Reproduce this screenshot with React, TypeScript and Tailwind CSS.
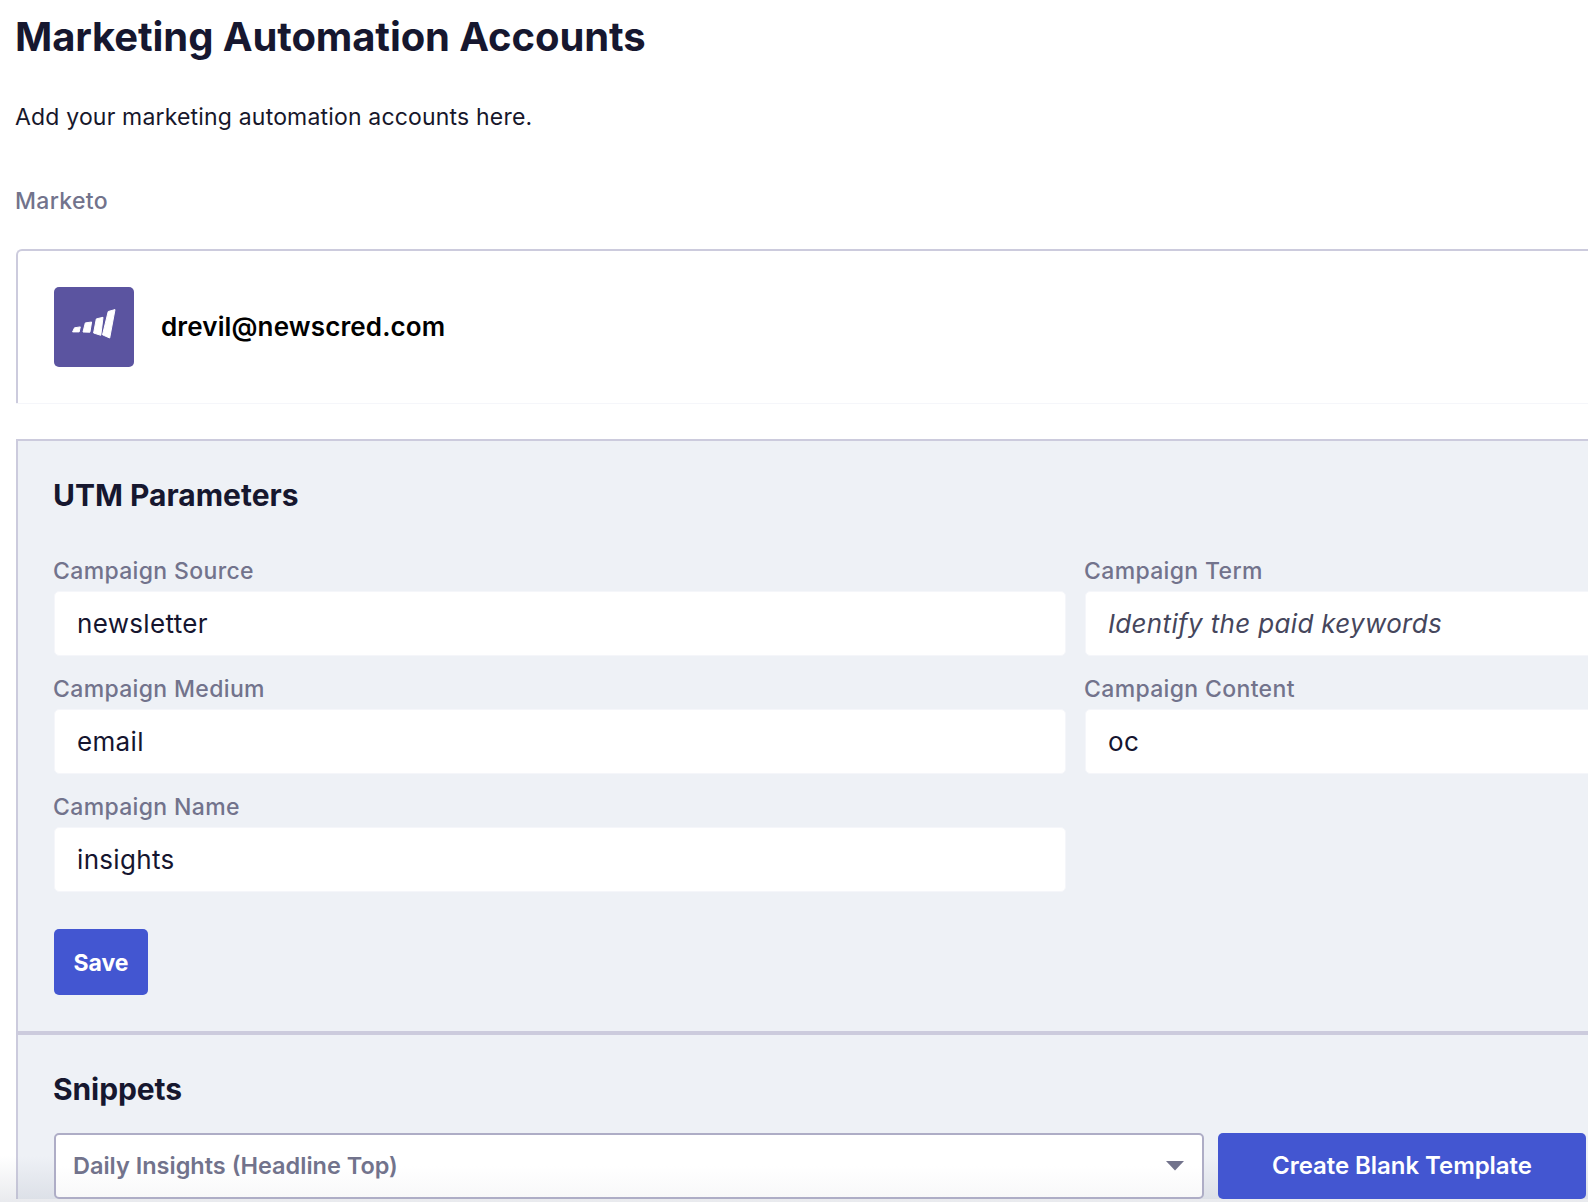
const font = { fontFamily: '"Inter", "Lato", sans-serif' };

function Field({ label, value, italic }: { label: string; value: string; italic?: boolean }) {
  return (
    <div className="flex flex-col">
      <div className="-ml-px h-[37px] text-[23px] leading-[34px] font-medium text-[#72738c] tracking-[0.35px]">{label}</div>
      <div className="h-[65px] rounded-[5px] border border-[#f5f6fa] bg-white pl-[22px] flex items-center">
        <span className={italic ? "text-[26px] italic text-[#45465c] tracking-[0.33px]" : "text-[26px] text-[#15152f] tracking-[0.33px]"}>{value}</span>
      </div>
    </div>
  );
}

export default function App() {
  return (
    <div className="relative h-[1202px] w-[1588px] overflow-hidden bg-white" style={font}>
      <div className="pl-[16px]">
        <h1 className="-ml-px pt-[10px] h-[76px] text-[40px] leading-[54px] font-bold text-[#16172f] tracking-[-0.1px]">Marketing Automation Accounts</h1>
        <p className="-ml-px mt-[22px] h-[38px] text-[23px] leading-[38px] text-[#17172b] tracking-[0.18px]">Add your marketing automation accounts here.</p>
        <div className="-ml-px mt-[46px] h-[38px] text-[23px] leading-[38px] font-medium text-[#72738c] tracking-[0.33px]">Marketo</div>

        <div className="mt-[29px] w-[1640px] h-[154px] rounded-tl-[6px] border-l-2 border-t-2 border-[#cccbdd] pl-[36px] pt-[36px] flex items-start shadow-[0_1px_0_#f5f6fa]">
          <div className="w-[80px] h-[80px] rounded-[5px] bg-[#5b54a0] shrink-0">
            <svg viewBox="0 0 80 80" className="w-[80px] h-[80px]">
              <path
                d="M20.5 40.8 L26.3 39.9 L25.2 44.9 L18.6 44.9 Z M31.3 35.9 L37.6 35 L35.9 45.2 L29 45 Z M42.3 31.9 L49 30.3 L46.8 48.3 L39.6 46 Z M54.2 24.5 L61 22.6 L55.7 51 L48.5 47.8 Z"
                fill="#ffffff"
                stroke="#ffffff"
                strokeWidth="1"
                strokeLinejoin="round"
              />
            </svg>
          </div>
          <div className="ml-[27px] h-[78px] flex items-center text-[26px] font-semibold text-black tracking-[0.13px]">drevil@newscred.com</div>
        </div>

        <div className="mt-[36px] w-[1640px] border-l-2 border-t-2 border-[#cccbdd] bg-[#eef1f6]">
          <section className="pl-[36px] h-[594px] border-b-[4px] border-[#cccbdd]">
            <h2 className="-ml-px pt-[31px] h-[113px] text-[30px] leading-[46px] font-bold text-[#16172f]">UTM Parameters</h2>
            <div className="grid grid-cols-[1012px_1012px] gap-x-[19px] gap-y-[16px]">
              <Field label="Campaign Source" value="newsletter" />
              <Field label="Campaign Term" value="Identify the paid keywords" italic />
              <Field label="Campaign Medium" value="email" />
              <Field label="Campaign Content" value="oc" />
              <Field label="Campaign Name" value="insights" />
            </div>
            <button className="mt-[37px] w-[94px] h-[66px] pt-[2px] rounded-[5px] bg-[#4356d1] text-white text-[23px] font-bold">Save</button>
          </section>
          <section className="pl-[36px]">
            <h2 className="-ml-px pt-[31px] h-[98px] text-[30px] leading-[46px] font-bold text-[#16172f] tracking-[-0.1px]">Snippets</h2>
            <div className="relative z-10 flex items-start">
              <div className="w-[1150px] h-[66px] rounded-[5px] border-2 border-[#aeadc6] bg-gradient-to-b from-white from-50% to-[#f8f8f9] pl-[17px] pr-[18px] flex items-center justify-between">
                <span className="text-[23.5px] font-semibold text-[#72738c]">Daily Insights (Headline Top)</span>
                <svg viewBox="0 0 18 10" className="w-[18px] h-[10px]"><path d="M0 0 H18 L9 9.5 Z" fill="#72738c" /></svg>
              </div>
              <button className="ml-[14px] w-[368px] h-[66px] rounded-[5px] bg-[#4356d1] text-white text-[24px] font-semibold tracking-[-0.05px]">Create Blank Template</button>
            </div>
          </section>
        </div>
      </div>
      <div className="absolute inset-x-0 bottom-0 h-[46px] bg-gradient-to-b from-[#9aa0b000] to-[#9aa0b038] pointer-events-none" />
    </div>
  );
}
